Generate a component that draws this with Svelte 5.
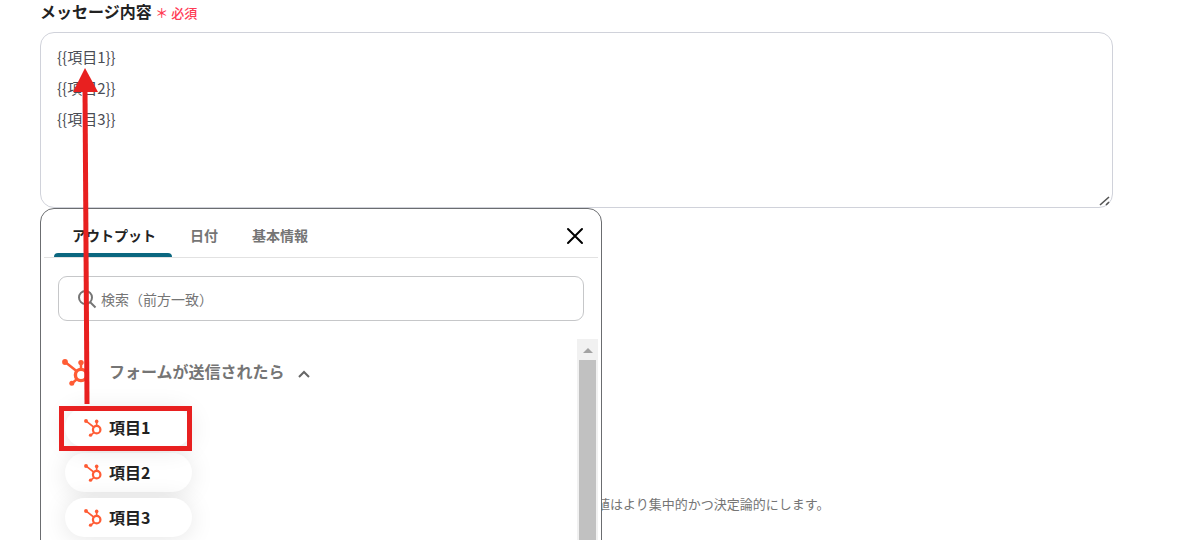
<script>
  let message = $state('{{項目1}}\n{{項目2}}\n{{項目3}}');
  let keyword = $state('');
  let activeTab = $state('アウトプット');
  let expanded = $state(true);

  const tabs = ['アウトプット', '日付', '基本情報'];
  const items = ['項目1', '項目2', '項目3'];

  function insertItem(item) {
    message += `\n{{${item}}}`;
  }
</script>

{#snippet hubspot()}
  <svg class="hubspot" viewBox="0 0 27 27" aria-hidden="true">
    <g fill="none" stroke="#ff5c35">
      <circle cx="19" cy="16" r="5.6" stroke-width="3.4" />
      <path d="M2.8 2.8 14.5 12M19 4v7M15 20l-4.6 4.2" stroke-width="2.5" />
    </g>
    <g fill="#ff5c35">
      <circle cx="3" cy="3" r="2.9" />
      <circle cx="19" cy="3.6" r="2.7" />
      <circle cx="9.8" cy="24.2" r="2.5" />
    </g>
  </svg>
{/snippet}

<main>
  <label class="title" for="message">メッセージ内容 <span>＊ 必須</span></label>

  <div class="field">
    <textarea id="message" bind:value={message}></textarea>
    <svg class="grip" viewBox="0 0 12 12" aria-hidden="true">
      <path d="M1 10 10 2M7 10l3-3" stroke="#555" stroke-width="1.6" fill="none" />
    </svg>

    <section class="picker">
      <header>
        <nav>
          {#each tabs as tab}
            <button class="tab" class:active={tab === activeTab} onclick={() => (activeTab = tab)}>{tab}</button>
          {/each}
        </nav>
        <button class="close" aria-label="閉じる">
          <svg viewBox="0 0 18 18"><path d="M2 2l14 14M16 2 2 16" stroke="#000" stroke-width="2" stroke-linecap="round" /></svg>
        </button>
      </header>

      <div class="search">
        <svg viewBox="0 0 20 20" aria-hidden="true">
          <circle cx="8.5" cy="8.5" r="6.5" />
          <path d="M13 13l5.5 5.5" />
        </svg>
        <input type="text" aria-label="検索" placeholder="検索（前方一致）" bind:value={keyword} />
      </div>

      <div class="body">
        <div class="list">
          <button class="group" onclick={() => (expanded = !expanded)}>
            {@render hubspot()}
            <span>フォームが送信されたら</span>
            <svg class="chevron" viewBox="0 0 14 10" aria-hidden="true"><path d="M2 8l5-5 5 5" /></svg>
          </button>
          {#if expanded}
            <ul>
              {#each items as item, i}
                <li class:marked={i === 0}>
                  <button class="item" onclick={() => insertItem(item)}>
                    {@render hubspot()}
                    <span>{item}</span>
                  </button>
                </li>
              {/each}
            </ul>
          {/if}
        </div>
        <div class="scrollbar">
          <svg viewBox="0 0 21 21" aria-hidden="true"><path d="M6 14l5-5 5 5z" fill="#a3a3a3" /></svg>
          <div class="thumb"></div>
        </div>
      </div>
    </section>

    <svg class="arrow" viewBox="0 0 30 340" aria-hidden="true">
      <path d="M15 20 17 336" stroke="#e82020" stroke-width="5" />
      <path d="M15 0 28 24H3z" fill="#e82020" />
    </svg>
  </div>

  <p class="help">値はより集中的かつ決定論的にします。</p>
</main>

<style>
  :global(body) {
    background: #fff;
  }
  main {
    height: 100vh;
    overflow: hidden;
    padding: 0 72px 0 40px;
    box-sizing: border-box;
    font-family: 'Noto Sans CJK JP', 'Noto Sans', sans-serif;
    color: #222;
  }
  button {
    padding: 0;
    border: none;
    background: none;
    font: inherit;
    color: inherit;
    cursor: pointer;
  }
  .title {
    display: block;
    height: 32px;
    font-size: 16px;
    line-height: 22px;
    font-weight: 700;
  }
  .title span {
    font-size: 13px;
    font-weight: 500;
    color: #ff3b54;
  }
  .field {
    position: relative;
  }
  textarea {
    display: block;
    width: 100%;
    height: 176px;
    box-sizing: border-box;
    padding: 8px 16px;
    border: 1px solid #d0d2da;
    border-radius: 14px;
    outline: none;
    resize: none;
    overflow: hidden;
    font-family: inherit;
    font-size: 15px;
    line-height: 31px;
    color: #4a4d55;
  }
  .grip {
    position: absolute;
    right: 2px;
    top: 163px;
    width: 12px;
    height: 12px;
  }
  .picker {
    position: absolute;
    left: 0;
    top: 100%;
    width: 562px;
    box-sizing: border-box;
    padding: 0 3px;
    border: 1px solid #6b6d70;
    border-radius: 14px;
    background: #fff;
  }
  header {
    display: flex;
    justify-content: space-between;
    height: 48px;
    border-bottom: 1px solid #e2e2e2;
  }
  nav {
    display: flex;
    margin-left: 10px;
  }
  .tab {
    position: relative;
    padding: 4px 16px 0 18px;
    font-size: 14px;
    font-weight: 700;
    color: #757575;
  }
  .tab.active {
    color: #222;
  }
  .tab.active::after {
    content: '';
    position: absolute;
    left: 0;
    right: 0;
    bottom: 0;
    height: 4px;
    border-radius: 4px 4px 0 0;
    background: #0b6780;
  }
  .close {
    display: flex;
    align-items: center;
    padding: 6px 14px 0;
  }
  .close svg {
    width: 18px;
    height: 18px;
  }
  .search {
    display: flex;
    align-items: center;
    gap: 4px;
    height: 43px;
    margin: 18px 14px;
    padding: 0 18px;
    border: 1px solid #c6c7c9;
    border-radius: 9px;
  }
  .search svg {
    flex: none;
    width: 20px;
    height: 20px;
    fill: none;
    stroke: #757575;
    stroke-width: 2;
  }
  input {
    flex: 1;
    padding: 0;
    border: none;
    outline: none;
    font-family: inherit;
    font-size: 14px;
  }
  input::placeholder {
    color: #757575;
    opacity: 1;
  }
  .body {
    display: flex;
    height: 320px;
  }
  .list {
    flex: 1;
    padding: 16px 0 0 18px;
    overflow: hidden;
  }
  .group {
    display: flex;
    align-items: center;
    height: 34px;
    font-size: 16px;
    font-weight: 700;
    color: #757575;
  }
  .group span,
  .item span {
    padding-bottom: 2px;
  }
  .group .hubspot {
    width: 27px;
    height: 27px;
    margin-right: 20px;
  }
  .chevron {
    width: 14px;
    height: 10px;
    margin: 4px 0 0 12px;
    fill: none;
    stroke: #666;
    stroke-width: 2;
  }
  ul {
    display: flex;
    flex-direction: column;
    align-items: flex-start;
    gap: 6px;
    margin: 0;
    padding: 19px 0 0 3px;
    list-style: none;
  }
  .item {
    display: flex;
    align-items: center;
    gap: 7px;
    width: 127px;
    height: 39px;
    padding-left: 19px;
    border-radius: 20px;
    background: #fff;
    box-shadow: 0 2px 24px rgba(0, 0, 0, 0.1);
    font-size: 16px;
    font-weight: 700;
  }
  .item .hubspot {
    width: 18px;
    height: 18px;
  }
  .marked {
    position: relative;
  }
  .marked::after {
    content: '';
    position: absolute;
    inset: -2px 0 -4px -6px;
    border: 5px solid #e82020;
    pointer-events: none;
  }
  .scrollbar {
    display: flex;
    flex-direction: column;
    width: 21px;
    background: #f1f1f1;
  }
  .scrollbar svg {
    width: 21px;
    height: 21px;
  }
  .thumb {
    flex: 1;
    margin: 0 2px;
    background: #c1c1c1;
  }
  .arrow {
    position: absolute;
    left: 30px;
    top: 36px;
    width: 30px;
    height: 340px;
    pointer-events: none;
  }
  .help {
    margin: 286px 0 0 557px;
    font-size: 13px;
    line-height: 20px;
    color: #757575;
  }
</style>
